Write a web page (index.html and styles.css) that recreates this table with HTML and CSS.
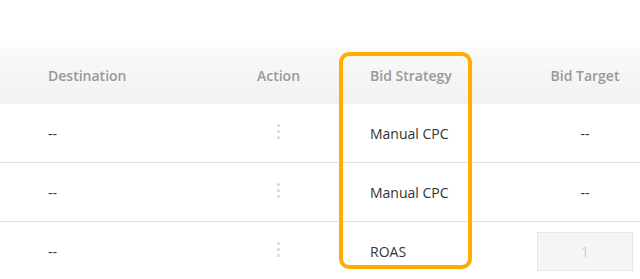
FILE: index.html
```html
<!DOCTYPE html>
<html lang="en">
<head>
    <meta charset="UTF-8">
    <meta name="viewport" content="width=device-width, initial-scale=1.0">
    <title>Campaign Bids</title>
    <link rel="stylesheet" href="styles.css">
</head>
<body>
    <div class="page">
        <div class="table-wrap">
            <div class="row head">
                <div class="cell dest">Destination</div>
                <div class="cell action">Action</div>
                <div class="cell strategy">Bid Strategy</div>
                <div class="cell target">Bid Target</div>
            </div>
            <div class="row">
                <div class="cell dest">--</div>
                <div class="cell action"><span class="kebab"><i></i><i></i><i></i></span></div>
                <div class="cell strategy">Manual CPC</div>
                <div class="cell target">--</div>
            </div>
            <div class="row">
                <div class="cell dest">--</div>
                <div class="cell action"><span class="kebab"><i></i><i></i><i></i></span></div>
                <div class="cell strategy">Manual CPC</div>
                <div class="cell target">--</div>
            </div>
            <div class="row last">
                <div class="cell dest">--</div>
                <div class="cell action"><span class="kebab"><i></i><i></i><i></i></span></div>
                <div class="cell strategy">ROAS</div>
                <div class="cell target"><input class="target-input" type="text" value="1" disabled></div>
            </div>
            <!-- highlight around the bid strategy column -->
            <div class="highlight"></div>
        </div>
    </div>
</body>
</html>
```

FILE: styles.css
```css
body {
    margin: 0;
    padding: 0;
    background: #fff;
    font-family: "Open Sans", Arial, sans-serif;
    overflow: hidden;
}
.page {
    width: 640px;
    padding-top: 47px;
}
.table-wrap {
    position: relative;
}
.row {
    display: grid;
    grid-template-columns: 218px 121px 133px 168px;
    height: 58px;
    border-bottom: 1px solid #e0e0e0;
    align-items: center;
    font-size: 14px;
    color: #333;
}
.row.head {
    height: 57px;
    border-bottom: none;
    background: linear-gradient(#fafafa, #f1f1f1);
    color: #999;
    font-weight: 600;
}
.row.last {
    border-bottom: none;
}
.cell.dest {
    padding-left: 48px;
}
.cell.action {
    text-align: center;
}
.cell.strategy {
    padding-left: 31px;
}
.cell.target {
    padding-left: 58px;
    text-align: center;
}
.kebab {
    display: inline-flex;
    flex-direction: column;
    gap: 3px;
    vertical-align: middle;
    margin-top: -6px;
}
.kebab i {
    display: block;
    width: 3px;
    height: 3px;
    border-radius: 50%;
    background: #d6d6d6;
}
.target-input {
    width: 96px;
    height: 39px;
    box-sizing: border-box;
    border: 1px solid #e6e6e6;
    background: #f5f5f5;
    text-align: center;
    font-family: inherit;
    font-size: 14px;
    color: #ccc;
    display: block;
    margin: 0 auto;
}
.highlight {
    position: absolute;
    left: 339px;
    top: 5px;
    width: 133px;
    height: 217px;
    box-sizing: border-box;
    border: 4px solid #ffad00;
    border-radius: 10px;
}
```
